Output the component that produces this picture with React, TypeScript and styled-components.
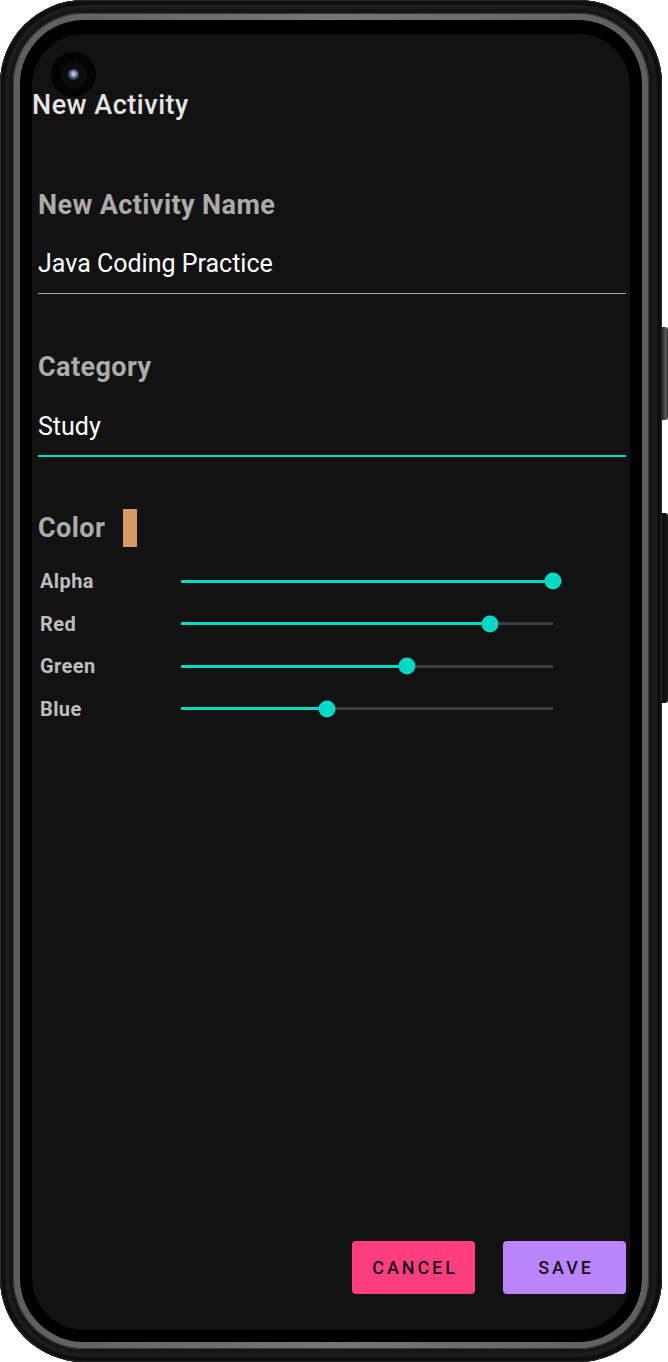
import React from "react";
import styled, { createGlobalStyle } from "styled-components";

const GlobalStyle = createGlobalStyle`
  html, body { margin: 0; padding: 0; background: #ffffff; }
  body { font-family: Roboto, "Noto Sans", "Liberation Sans", sans-serif; }
  * { box-sizing: border-box; }
`;

const TEAL = "#03dac5";

const Page = styled.div`
  display: flex;
  flex-direction: row;
  align-items: flex-start;
  width: 668px;
  height: 1362px;
`;

const Body = styled.div`
  display: flex;
  width: 662px;
  height: 1362px;
  padding: 13px;
  border-radius: 84px;
  background: #161616;
  box-shadow: inset 0 0 0 1px #2a2a2a, inset 0 0 0 5px #0e0e0e, inset 0 0 0 9px #1c1c1c;
`;

const Rim = styled.div`
  flex: 1;
  display: flex;
  padding: 7px;
  border-radius: 71px;
  background: linear-gradient(90deg, #5e5e5e 0%, #767676 50%, #5e5e5e 100%);
  box-shadow: inset 0 0 0 1px #3a3a3a;
`;

const Bezel = styled.div`
  flex: 1;
  display: flex;
  padding: 14px 12px 12px 12px;
  border-radius: 64px;
  background: #000;
`;

const Screen = styled.div`
  position: relative;
  flex: 1;
  display: flex;
  flex-direction: column;
  border-radius: 52px;
  background: #121212;
  overflow: hidden;
`;

const Camera = styled.div`
  position: absolute;
  left: 19px;
  top: 18px;
  width: 45px;
  height: 45px;
  border-radius: 50%;
  background: #030303;
  display: flex;
  align-items: center;
  justify-content: center;
`;

const CameraRing = styled.div`
  width: 30px;
  height: 30px;
  border-radius: 50%;
  background: #0c0c0c;
  box-shadow: inset 0 0 0 2px #050505;
  display: flex;
  align-items: center;
  justify-content: center;
`;

const Lens = styled.div`
  width: 11px;
  height: 11px;
  border-radius: 50%;
  background: radial-gradient(circle at 50% 45%, #e4eefa 0%, #7f96b4 28%, #2a3444 65%, #0c0c0c 100%);
`;

const Title = styled.h1`
  position: relative;
  margin: 55px 0 0 0;
  font-size: 27px;
  line-height: 32px;
  font-weight: 500;
  letter-spacing: 0.5px;
  color: #e4e4e4;
`;

const Form = styled.div`
  display: flex;
  flex-direction: column;
  padding: 0 4px 0 6px;
  margin-top: 68px;
`;

const Field = styled.div`
  display: flex;
  flex-direction: column;
  margin-bottom: 57px;
`;

const Label = styled.div`
  font-size: 27px;
  line-height: 32px;
  font-weight: 700;
  letter-spacing: 0.4px;
  color: #ababab;
`;

const Value = styled.div<{ $focused?: boolean }>`
  margin-top: ${(p) => (p.$focused ? "29px" : "28px")};
  font-size: 25px;
  line-height: 30px;
  font-weight: 400;
  color: #ffffff;
  padding-bottom: ${(p) => (p.$focused ? "13px" : "14px")};
  border-bottom: ${(p) => (p.$focused ? `2px solid ${TEAL}` : "1px solid #a8a8a8")};
`;

const ColorHeader = styled.div`
  display: flex;
  align-items: center;
  gap: 18px;
  margin-top: -5px;
  height: 38px;
`;

const Swatch = styled.div<{ $color: string }>`
  width: 14px;
  height: 38px;
  background: ${(p) => p.$color};
`;

const SliderList = styled.div`
  display: flex;
  flex-direction: column;
  margin-top: 13px;
`;

const SliderRow = styled.div`
  display: flex;
  align-items: center;
  height: 42.5px;
`;

const SliderLabel = styled.div`
  width: 143px;
  padding-left: 2px;
  font-size: 20px;
  font-weight: 700;
  letter-spacing: 0.4px;
  color: #bdbdbd;
`;

const Track = styled.div`
  position: relative;
  width: 372px;
  height: 3px;
  background: #3e3e3e;
`;

const Fill = styled.div`
  height: 100%;
  background: ${TEAL};
`;

const Thumb = styled.div`
  position: absolute;
  top: 50%;
  width: 17px;
  height: 17px;
  border-radius: 50%;
  background: ${TEAL};
  transform: translate(-50%, -50%);
`;

const Spacer = styled.div`
  flex: 1;
`;

const ButtonRow = styled.div`
  display: flex;
  justify-content: flex-end;
  gap: 28px;
  padding: 0 4px 36px 0;
`;

const Button = styled.button<{ $bg: string }>`
  width: 123px;
  height: 53px;
  border: none;
  border-radius: 4px;
  background: ${(p) => p.$bg};
  color: #151515;
  font-family: Roboto, "Noto Sans", sans-serif;
  font-size: 18px;
  font-weight: 500;
  letter-spacing: 2.9px;
  padding: 0 0 0 3px;
`;

const SideRail = styled.div`
  display: flex;
  flex-direction: column;
  width: 6px;
  padding-top: 327px;
`;

const SideButton = styled.div<{ $h: number; $mt: number; $dark?: boolean }>`
  width: 6px;
  height: ${(p) => p.$h}px;
  margin-top: ${(p) => p.$mt}px;
  border-radius: 0 3px 3px 0;
  background: ${(p) =>
    p.$dark
      ? "linear-gradient(90deg, #0a0a0a, #1a1a1a)"
      : "linear-gradient(90deg, #222, #5a5a5a 60%, #333)"};
`;

const channels = [
  { name: "Alpha", value: 255 },
  { name: "Red", value: 212 },
  { name: "Green", value: 155 },
  { name: "Blue", value: 100 },
];

export default function App() {
  const [r, g, b] = [212, 155, 100];
  return (
    <>
      <GlobalStyle />
      <Page>
        <Body>
          <Rim>
            <Bezel>
              <Screen>
                <Camera>
                  <CameraRing>
                    <Lens />
                  </CameraRing>
                </Camera>
                <Title>New Activity</Title>
                <Form>
                  <Field>
                    <Label>New Activity Name</Label>
                    <Value>Java Coding Practice</Value>
                  </Field>
                  <Field>
                    <Label>Category</Label>
                    <Value $focused>Study</Value>
                  </Field>
                  <ColorHeader>
                    <Label>Color</Label>
                    <Swatch $color={`rgb(${r}, ${g}, ${b})`} />
                  </ColorHeader>
                  <SliderList>
                    {channels.map((c) => {
                      const pct = (c.value / 255) * 100;
                      return (
                        <SliderRow key={c.name}>
                          <SliderLabel>{c.name}</SliderLabel>
                          <Track>
                            <Fill style={{ width: `${pct}%` }} />
                            <Thumb style={{ left: `${pct}%` }} />
                          </Track>
                        </SliderRow>
                      );
                    })}
                  </SliderList>
                </Form>
                <Spacer />
                <ButtonRow>
                  <Button $bg="#ff3d7f">CANCEL</Button>
                  <Button $bg="#bb86fc">SAVE</Button>
                </ButtonRow>
              </Screen>
            </Bezel>
          </Rim>
        </Body>
        <SideRail>
          <SideButton $h={93} $mt={0} />
          <SideButton $h={190} $mt={93} $dark />
        </SideRail>
      </Page>
    </>
  );
}
